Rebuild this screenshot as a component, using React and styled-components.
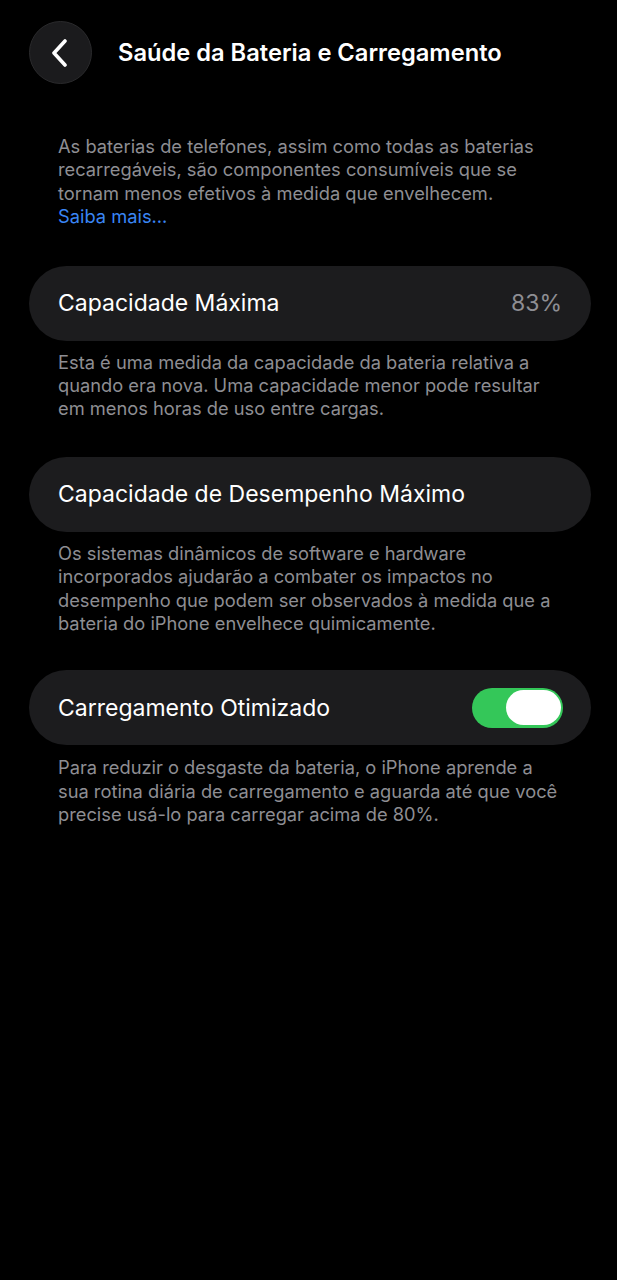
import React from "react";
import styled, { createGlobalStyle } from "styled-components";

const Global = createGlobalStyle`
  html, body { margin: 0; padding: 0; background: #000; }
  body { font-family: Inter, "Noto Sans", sans-serif; -webkit-font-smoothing: antialiased; }
  * { box-sizing: border-box; }
`;

const Page = styled.div`
  min-height: 1280px;
  background: #000;
  padding: 21px 26px 0 29px;
  display: flex;
  flex-direction: column;
`;

const Header = styled.header`
  display: flex;
  align-items: center;
  gap: 26px;
  height: 63px;
`;

const BackButton = styled.button`
  width: 63px;
  height: 63px;
  border-radius: 50%;
  background: #1b1b1d;
  border: 1px solid #2a2a2c;
  display: flex;
  align-items: center;
  justify-content: center;
  padding: 0 4px 0 0;
  flex-shrink: 0;
`;

const Title = styled.h1`
  margin: 0;
  color: #fff;
  font-size: 23.7px;
  font-weight: 600;
  letter-spacing: 0;
`;

const Note = styled.p`
  margin: ${(p) => p.$top}px 0 0 29px;
  color: #8e8e93;
  font-size: 18.3px;
  line-height: 23.4px;
  letter-spacing: 0;
  padding-right: 30px;
`;

const Link = styled.a`
  color: #3a86f5;
  text-decoration: none;
  display: block;
`;

const Card = styled.div`
  margin-top: ${(p) => p.$top}px;
  height: 75px;
  flex-shrink: 0;
  border-radius: 38px;
  background: #1c1c1e;
  display: flex;
  align-items: center;
  justify-content: space-between;
  padding: 0 29px;
`;

const Label = styled.span`
  color: #fff;
  font-size: 23px;
`;

const Value = styled.span`
  color: #8e8e93;
  font-size: 23px;
`;

const Toggle = styled.div`
  width: 91px;
  height: 40px;
  border-radius: 20px;
  background: #34c759;
  display: flex;
  align-items: center;
  justify-content: flex-end;
  padding: 0 2px;
  margin-right: -1px;
`;

const Knob = styled.div`
  width: 55px;
  height: 35px;
  border-radius: 18px;
  background: #fff;
`;

export default function App() {
  return (
    <>
      <Global />
      <Page>
        <Header>
          <BackButton aria-label="Voltar">
            <svg width="18" height="28" viewBox="0 0 18 28" fill="none">
              <path d="M15 2 L4 14 L15 26" stroke="#fff" strokeWidth="3.6" strokeLinecap="round" strokeLinejoin="round" />
            </svg>
          </BackButton>
          <Title>Saúde da Bateria e Carregamento</Title>
        </Header>

        <Note $top={51}>
          As baterias de telefones, assim como todas as baterias recarregáveis, são componentes consumíveis que se tornam menos efetivos à medida que envelhecem.
          <Link href="#">Saiba mais...</Link>
        </Note>

        <Card $top={37}>
          <Label>Capacidade Máxima</Label>
          <Value>83%</Value>
        </Card>
        <Note $top={10}>
          Esta é uma medida da capacidade da bateria relativa a quando era nova. Uma capacidade menor pode resultar em menos horas de uso entre cargas.
        </Note>

        <Card $top={36}>
          <Label>Capacidade de Desempenho Máximo</Label>
        </Card>
        <Note $top={10}>
          Os sistemas dinâmicos de software e hardware incorporados ajudarão a combater os impactos no desempenho que podem ser observados à medida que a bateria do iPhone envelhece quimicamente.
        </Note>

        <Card $top={35}>
          <Label>Carregamento Otimizado</Label>
          <Toggle>
            <Knob />
          </Toggle>
        </Card>
        <Note $top={11}>
          Para reduzir o desgaste da bateria, o iPhone aprende a sua rotina diária de carregamento e aguarda até que você precise usá-lo para carregar acima de 80%.
        </Note>
      </Page>
    </>
  );
}
